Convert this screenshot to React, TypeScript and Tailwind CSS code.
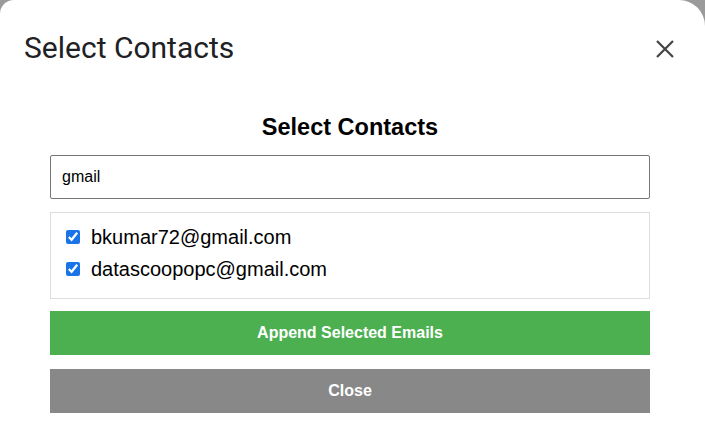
const contacts = ["bkumar72@gmail.com", "datascoopopc@gmail.com"];

export default function App() {
  return (
    <div className="w-[705px] h-[430px] bg-[#9a9a9a] overflow-hidden">
      <div className="h-full bg-white rounded-tl-[14px] rounded-tr-[26px] flex flex-col">
        <div className="flex items-center justify-between pl-[24px] pr-[31px] pt-[30px]">
          <h1 className="text-[30px] leading-[36px] text-[#202124] font-['Roboto',sans-serif]">
            Select Contacts
          </h1>
          <svg width="18" height="18" viewBox="0 0 18 18" className="mt-[2px]">
            <path d="M1 1L17 17M17 1L1 17" stroke="#444" strokeWidth="2.2" />
          </svg>
        </div>

        <div className="w-[600px] ml-[50px] pt-[47px] font-['Liberation_Sans',Arial,sans-serif]">
          <h3 className="text-center text-[23.5px] leading-[28px] font-bold text-black">
            Select Contacts
          </h3>
          <input
            type="text"
            defaultValue="gmail"
            className="mt-[14px] w-full h-[44px] border border-[#767676] rounded-[2px] px-[11px] text-[16px] text-black outline-none"
          />
          <div className="mt-[13px] h-[87px] border border-[#dddddd] px-[15px] pt-[13px] flex flex-col gap-[10px]">
            {contacts.map((c) => (
              <label key={c} className="flex items-center gap-[11px] text-[20px] leading-[22px] text-black">
                <input type="checkbox" defaultChecked className="w-[14px] h-[14px] m-0 accent-[#1a73e8]" />
                {c}
              </label>
            ))}
          </div>
          <button className="mt-[12px] w-full h-[44px] bg-[#4caf50] text-white font-bold text-[16px]">
            Append Selected Emails
          </button>
          <button className="mt-[14px] w-full h-[44px] bg-[#888888] text-white font-bold text-[16px]">
            Close
          </button>
        </div>
      </div>
    </div>
  );
}
